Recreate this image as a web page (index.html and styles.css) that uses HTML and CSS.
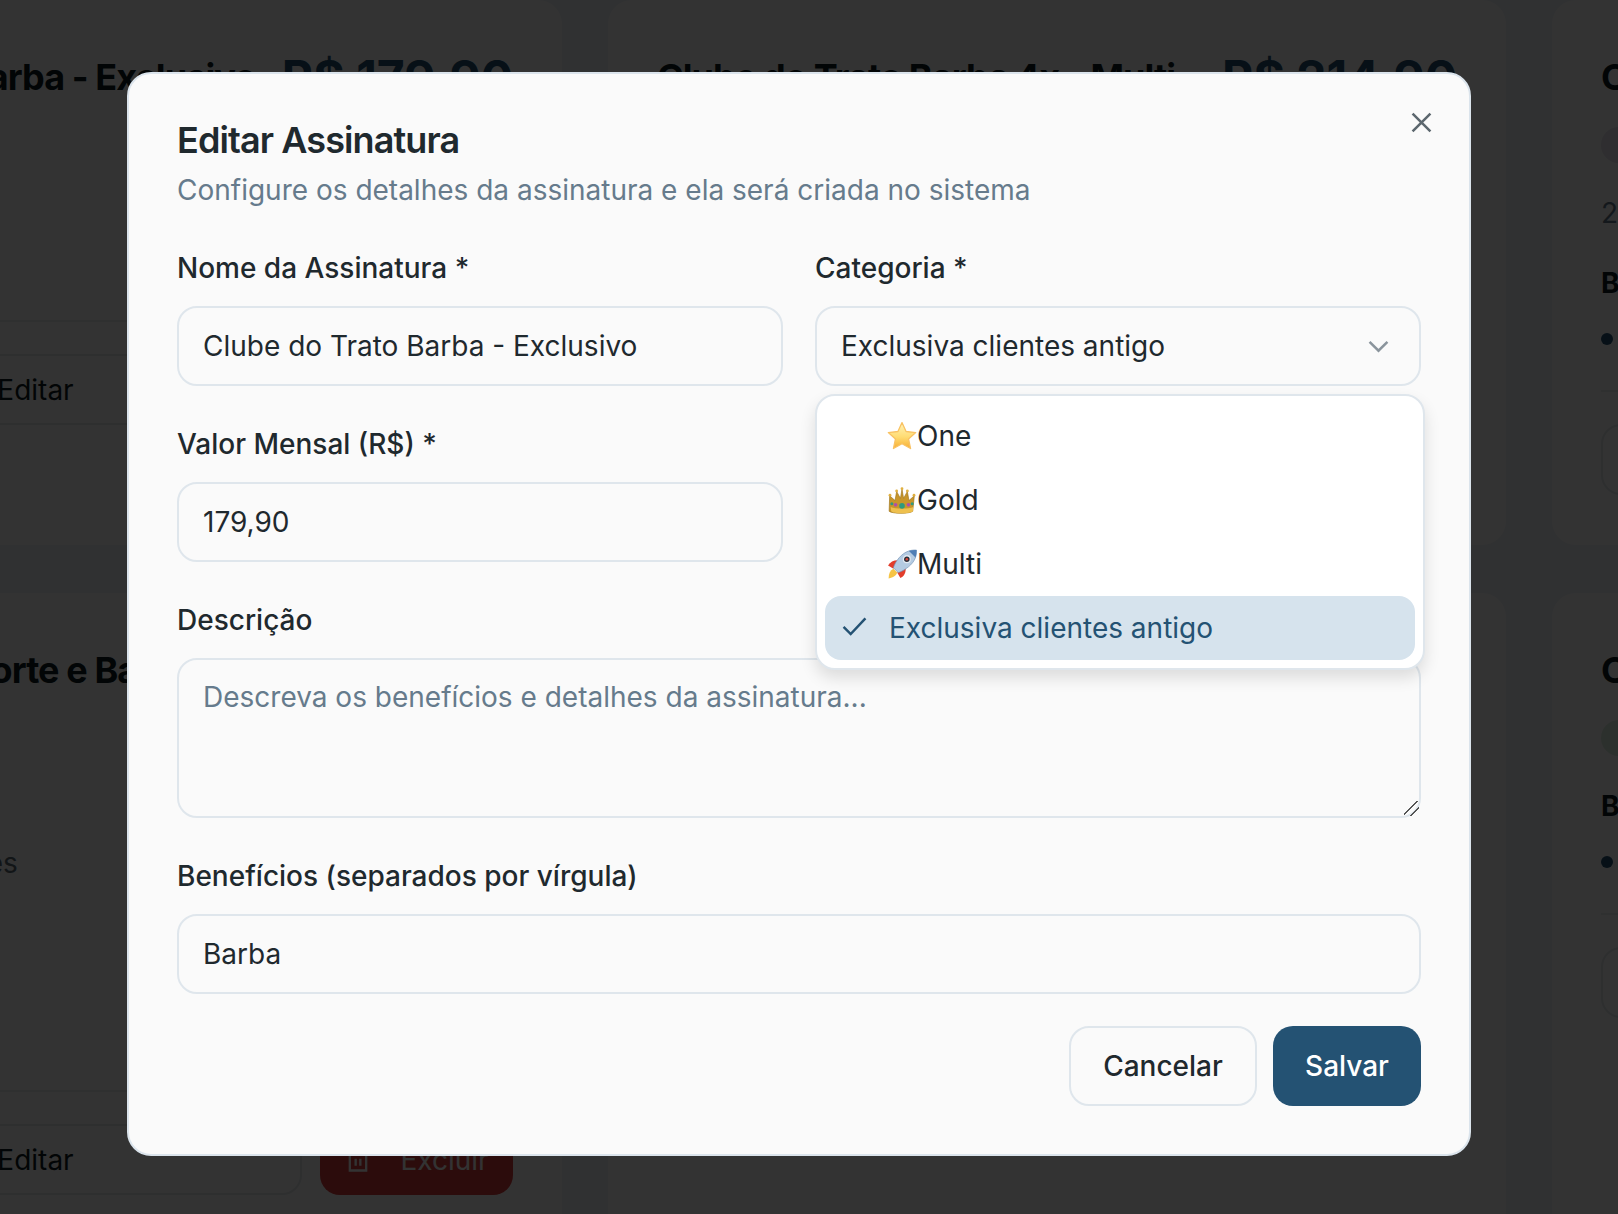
FILE: index.html
```html
<!DOCTYPE html>
<html lang="pt-BR">
<head>
  <meta charset="UTF-8" />
  <meta name="viewport" content="width=device-width, initial-scale=1.0" />
  <title>Editar Assinatura</title>
  <link rel="stylesheet" href="styles.css">
</head>
<body>
  <div class="grade">
    <div class="card">
      <div class="card-topo">
        <h3>Clube do Trato Barba - Exclusivo</h3>
        <span class="preco">R$ 179,90</span>
      </div>
      <span class="pill">Exclusiva</span>
      <h4>Benefícios:</h4>
      <ul><li>Barba</li></ul>
      <div class="card-botoes">
        <button class="btn-editar"><svg class="ico" viewBox="0 0 24 24"><path d="M4 20h4L19 9l-4-4L4 16z"/></svg>Editar</button>
        <button class="btn-excluir"><svg class="ico" viewBox="0 0 24 24"><path d="M3 6h18M8 6V4h8v2M5 6h14v15H5zM10 11v6M14 11v6"/></svg>Excluir</button>
      </div>
    </div>
    <div class="card">
      <div class="card-topo">
        <h3>Clube do Trato Barba 4x - Multi</h3>
        <span class="preco">R$ 214,90</span>
      </div>
    </div>
    <div class="card">
      <div class="card-topo"><h3>Clube do Trato</h3></div>
      <span class="pill">Gold</span>
      <p class="desc">2 barbas por mês</p>
      <h4>Benefícios:</h4>
      <ul><li>Barba</li></ul>
      <div class="card-botoes">
        <button class="btn-editar">Editar</button>
      </div>
    </div>
    <div class="card">
      <div class="card-topo">
        <h3>Clube do Trato Corte e Barba - Exclusivo</h3>
      </div>
      <span class="pill">Exclusiva</span>
      <h4>Benefícios:</h4>
      <ul>
        <li>Plano pra os clientes</li>
        <li>Corte</li>
        <li>Barba</li>
        <li>Café</li>
      </ul>
      <div class="card-botoes">
        <button class="btn-editar"><svg class="ico" viewBox="0 0 24 24"><path d="M4 20h4L19 9l-4-4L4 16z"/></svg>Editar</button>
        <button class="btn-excluir"><svg class="ico" viewBox="0 0 24 24"><path d="M3 6h18M8 6V4h8v2M5 6h14v15H5zM10 11v6M14 11v6"/></svg>Excluir</button>
      </div>
    </div>
    <div class="card">
      <div class="card-topo"><h3>Clube do Trato Corte</h3></div>
    </div>
    <div class="card">
      <div class="card-topo"><h3>Clube do Trato</h3></div>
      <span class="pill verde">One</span>
      <h4>Benefícios:</h4>
      <ul><li>Corte</li></ul>
      <div class="card-botoes">
        <button class="btn-editar">Editar</button>
      </div>
    </div>
  </div>

  <div class="overlay"></div>

  <div class="modal">
    <button class="fechar" aria-label="Fechar">
      <svg viewBox="0 0 20 20"><path d="M1.500 1.500l17 17M18.500 1.500l-17 17"/></svg>
    </button>
    <h2>Editar Assinatura</h2>
    <p class="sub">Configure os detalhes da assinatura e ela será criada no sistema</p>

    <form class="campos">
      <div class="campo">
        <label for="nome">Nome da Assinatura *</label>
        <input type="text" id="nome" value="Clube do Trato Barba - Exclusivo" />
      </div>
      <div class="campo">
        <label>Categoria *</label>
        <div class="select-fake">
          <span>Exclusiva clientes antigo</span>
          <svg viewBox="0 0 20 12"><path d="M1.500 1.500L10 10l8.500-8.500"/></svg>
        </div>
      </div>
      <div class="campo">
        <label for="valor">Valor Mensal (R$) *</label>
        <input type="text" id="valor" value="179,90" />
      </div>
      <div class="campo"></div>
      <div class="campo largo">
        <label for="descricao">Descrição</label>
        <textarea id="descricao" placeholder="Descreva os benefícios e detalhes da assinatura..."></textarea>
      </div>
      <div class="campo largo">
        <label for="beneficios">Benefícios (separados por vírgula)</label>
        <input type="text" id="beneficios" value="Barba" />
      </div>
    </form>

    <div class="acoes">
      <button class="btn-cancelar">Cancelar</button>
      <button class="btn-salvar">Salvar</button>
    </div>

    <div class="opcoes">
      <div class="opcao">
        <svg class="emoji" viewBox="0 0 28 28">
          <defs><linearGradient id="estrela" x1="0" y1="0" x2="0" y2="1"><stop offset="0" stop-color="#fff3b8"/><stop offset="0.55" stop-color="#ffdc73"/><stop offset="1" stop-color="#f7ae32"/></linearGradient></defs>
          <path d="M14 1.500l3.800 8.300 9 1-6.700 6 1.900 8.900L14 21.200l-8 4.500 1.900-8.900-6.700-6 9-1z" fill="url(#estrela)" stroke="#f9c263" stroke-width="1.200" stroke-linejoin="round"/>
        </svg>One
      </div>
      <div class="opcao">
        <svg class="emoji" viewBox="0 0 28 28">
          <path d="M2.500 10l5 4.500 1.500-8.500 3.500 6.500 1.500-8.500 1.500 8.500 3.500-6.500 1.500 8.500 5-4.500-1.500 14.500c-3 2.500-19 2.500-22 0z" fill="#c8962a" stroke="#9c7218" stroke-width=".6" stroke-linejoin="round"/>
          <path d="M3.500 20.500c4 2 17 2 21 0l-.4 4c-3 2.500-17.200 2.500-20.200 0z" fill="#eec04e"/>
          <circle cx="2.800" cy="9.500" r="1.300" fill="#e0b040"/><circle cx="9" cy="5.500" r="1.300" fill="#e0b040"/><circle cx="14" cy="3.500" r="1.300" fill="#e0b040"/><circle cx="19" cy="5.500" r="1.300" fill="#e0b040"/><circle cx="25.200" cy="9.500" r="1.300" fill="#e0b040"/>
          <circle cx="14" cy="19.500" r="2.600" fill="#2f9a7e"/><circle cx="8" cy="18.500" r="1.700" fill="#b04fa8"/><circle cx="20" cy="18.500" r="1.700" fill="#b04fa8"/><circle cx="4.500" cy="17.500" r="1.400" fill="#2f9a7e"/><circle cx="23.500" cy="17.500" r="1.400" fill="#2f9a7e"/>
        </svg>Gold
      </div>
      <div class="opcao">
        <svg class="emoji" viewBox="0 0 28 28">
          <path d="M1.500 27.500c0-4.500 1.500-7.500 4.500-9l3.500 3.500c-1 3-3.500 4.500-8 5.500z" fill="#f6c445"/>
          <path d="M1 15.500C3 12 6 10.500 10 10.500L6 18.500z" fill="#e23d2b"/>
          <path d="M12.500 27c3.500-1.500 5-4.500 5-9L9.500 22z" fill="#e23d2b"/>
          <path d="M27.500 1c-7-.5-13 2.500-18 9.500-1.500 2-3 5-3.500 7l4.500 4.500c2-.5 5-2 7-3.500C24.500 14 28 8 27.500 1z" fill="#b4cbe2" stroke="#6f8fb3" stroke-width=".6"/>
          <circle cx="18.500" cy="9.500" r="3.200" fill="#2b2f3a" stroke="#e3ebf3" stroke-width="1.200"/>
          <circle cx="18.500" cy="9.500" r="1.200" fill="#d8483a"/>
          <path d="M27.500 1c-2.500-.2-5 .1-7 .9l6.100 6.100c.7-2 1-4.500.9-7z" fill="#4f7eb5"/>
        </svg>Multi
      </div>
      <div class="opcao marcada">
        <svg class="check" viewBox="0 0 26 20"><path d="M1.500 10.500l7.500 7.500L24.500 1.500"/></svg>
        Exclusiva clientes antigo
      </div>
    </div>
  </div>
</body>
</html>
```

FILE: styles.css
```css
* {
  box-sizing: border-box;
}
html, body {
  margin: 0;
  height: 100%;
  overflow: hidden;
}
body {
  font-family: Inter, "Liberation Sans", sans-serif;
  font-size: 28px;
  color: #1f292e;
  background: #f0f5f8;
}

/* tela de fundo, atras do modal */
.grade {
  display: grid;
  grid-template-columns: repeat(3, 898px);
  grid-template-rows: 545px auto;
  gap: 48px 46px;
  width: 2786px;
  margin-left: -336px;
}
.card {
  background: white;
  border-radius: 24px;
  padding: 49px;
  color: #0e1a22;
}
.card-topo {
  display: flex;
  justify-content: space-between;
  align-items: center;
  height: 56px;
  white-space: nowrap;
}
.card h3 {
  margin: 0;
  font-size: 36px;
  font-weight: 700;
  letter-spacing: -0.9px;
}
.preco {
  font-size: 48px;
  font-weight: 700;
  color: #245273;
}
.pill {
  display: block;
  width: 180px;
  height: 36px;
  margin-top: 22px;
  padding-left: 24px;
  border-radius: 18px;
  background: #e8e4ee;
  font-size: 24px;
  line-height: 36px;
}
.pill.verde {
  background: #dcefe0;
}
.desc {
  margin: 30px 0 2px;
  line-height: 40px;
  color: #667b8c;
}
.card h4 {
  margin: 30px 0 0;
  font-size: 28px;
  line-height: 40px;
  font-weight: 700;
}
.card ul {
  list-style: none;
  margin: 17px 0 0;
  padding: 0;
}
.card li {
  line-height: 40px;
  padding-left: 30px;
  position: relative;
  margin-bottom: 19px;
  color: #5b6a75;
}
.card li::before {
  content: "";
  position: absolute;
  left: 0;
  top: 13px;
  width: 12px;
  height: 12px;
  border-radius: 50%;
  background: #245273;
}
.card-botoes {
  display: flex;
  gap: 18px;
  margin-top: 30px;
  padding-top: 32px;
  border-top: 2px solid #e9edf0;
}
.card-botoes button {
  display: flex;
  align-items: center;
  justify-content: center;
  gap: 28px;
  height: 71px;
  border-radius: 20px;
  font: inherit;
}
.btn-editar {
  flex: 1;
  background: white;
  border: 2px solid #e3e8ec;
  color: #0e1a22;
}
.btn-excluir {
  width: 193px;
  background: #d93c3c;
  border: none;
  color: white;
}
.ico {
  width: 28px;
  height: 28px;
  fill: none;
  stroke: currentColor;
  stroke-width: 2;
}

.overlay {
  position: fixed;
  inset: 0;
  background: rgba(0, 0, 0, 0.8);
}

/* modal */
.modal {
  position: fixed;
  left: 127px;
  top: 72px;
  width: 1344px;
  height: 1084px;
  padding: 46px 48px 48px;
  background: #fafafa;
  border: 2px solid #dbe4ec;
  border-radius: 24px;
}
.modal h2 {
  margin: 0;
  font-size: 36px;
  line-height: 40px;
  font-weight: 600;
  letter-spacing: -0.9px;
}
.sub {
  margin: 10px 0 0;
  font-size: 28px;
  line-height: 40px;
  color: #667b8c;
}
.fechar {
  position: absolute;
  right: 37px;
  top: 38px;
  padding: 0;
  width: 21px;
  height: 21px;
  background: none;
  border: none;
}
.fechar svg {
  display: block;
  fill: none;
  stroke: #5c676e;
  stroke-width: 2.4;
}
.campos {
  display: grid;
  grid-template-columns: 1fr 1fr;
  gap: 45px 32px;
  margin-top: 45px;
}
.campo {
  display: flex;
  flex-direction: column;
  gap: 25px;
}
.largo {
  grid-column: 1 / 3;
}
label {
  font-size: 28px;
  line-height: 26px;
  font-weight: 500;
}
input[type="text"], textarea, .select-fake {
  width: 100%;
  height: 80px;
  padding: 0 24px;
  font: inherit;
  color: #1f292e;
  background: #fafafa;
  border: 2px solid #dfe6ec;
  border-radius: 20px;
  outline: none;
}
textarea {
  display: block;
  height: 160px;
  padding-top: 17px;
  line-height: 40px;
}
textarea::placeholder {
  color: #667b8c;
  opacity: 1;
}
textarea::-webkit-resizer {
  background: linear-gradient(135deg, transparent 42%, #555 42% 49%, transparent 49% 68%, #555 68% 75%, transparent 75%);
}
.select-fake {
  display: flex;
  align-items: center;
  justify-content: space-between;
}
.select-fake svg {
  width: 21px;
  height: 13px;
  margin-right: 6px;
  fill: none;
  stroke: #8a949c;
  stroke-width: 2.4;
}
.acoes {
  display: flex;
  justify-content: flex-end;
  gap: 16px;
  margin-top: 32px;
}
.acoes button {
  height: 80px;
  border-radius: 20px;
  font: inherit;
  font-weight: 500;
}
.btn-cancelar {
  width: 188px;
  background: #fafafa;
  border: 2px solid #dfe6ec;
  color: #1f292e;
}
.btn-salvar {
  width: 148px;
  background: #245273;
  border: none;
  color: white;
}

/* lista aberta do select */
.opcoes {
  position: absolute;
  left: 686px;
  top: 320px;
  width: 610px;
  padding: 8px;
  background: white;
  border: 2px solid #dfe6ec;
  border-radius: 20px;
  box-shadow: 0 8px 16px rgba(0, 0, 0, 0.12);
}
.opcao {
  position: relative;
  display: flex;
  align-items: center;
  height: 64px;
  padding-left: 64px;
  border-radius: 16px;
}
.emoji {
  width: 30px;
  height: 30px;
  margin-left: -2px;
}
.marcada {
  background: #d6e3ed;
  color: #245273;
}
.check {
  position: absolute;
  left: 17px;
  top: 21px;
  width: 25px;
  height: 19px;
  fill: none;
  stroke: #245273;
  stroke-width: 2.6;
}
```
